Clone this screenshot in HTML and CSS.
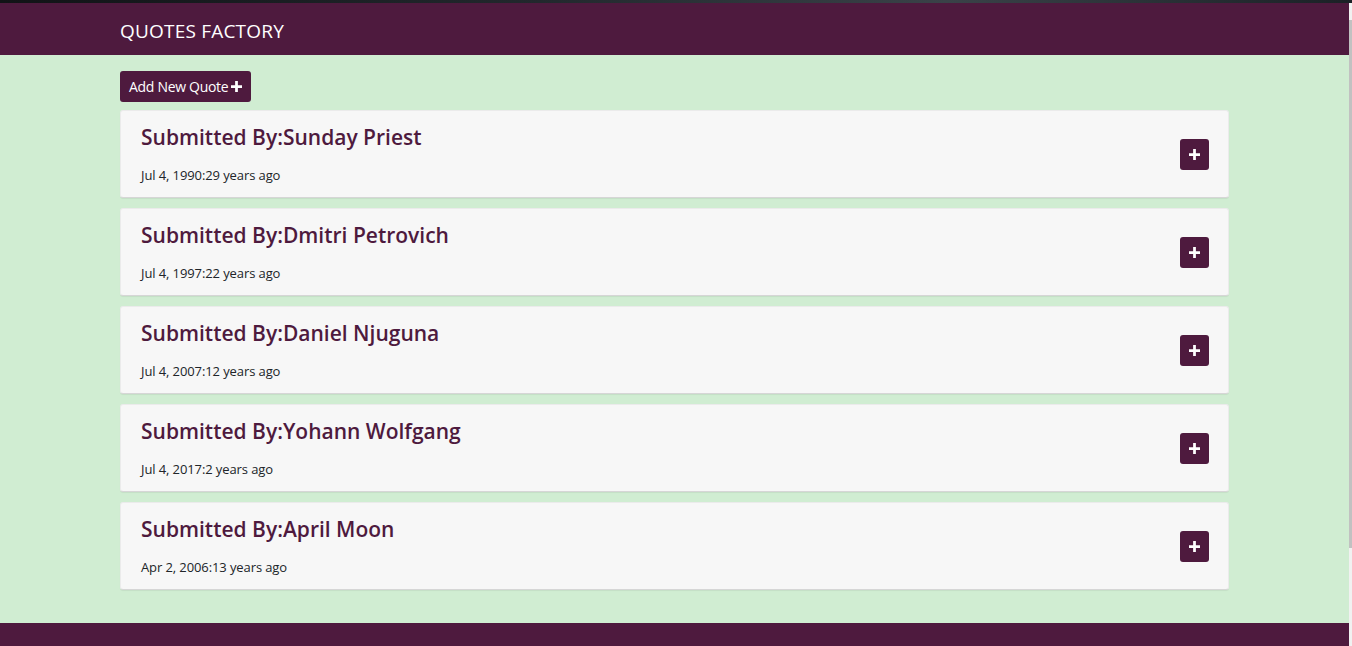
FILE: index.html
```html
<!DOCTYPE html>
<html lang="en">
<head>
<meta charset="utf-8">
<title>Quotes Factory</title>
<link rel="stylesheet" href="styles.css">
</head>
<body>
<div class="topstrip"></div>
<div class="frame">
  <div class="page">
    <header class="navbar">
      <div class="container">
        <span class="brand">QUOTES FACTORY</span>
      </div>
    </header>
    <main class="main">
      <div class="container">
        <button class="btn-add">Add New Quote<svg class="plus" viewBox="0 0 12 12"><path d="M4.5 0h3v4.5H12v3H7.5V12h-3V7.5H0v-3h4.5z"/></svg></button>
        <div class="cards">
          <div class="card">
            <div class="card-text">
              <h3 class="title">Submitted By:Sunday Priest</h3>
              <p class="date">Jul 4, 1990:29 years ago</p>
            </div>
            <button class="btn-toggle"><svg class="plus" viewBox="0 0 12 12"><path d="M4.5 0h3v4.5H12v3H7.5V12h-3V7.5H0v-3h4.5z"/></svg></button>
          </div>
          <div class="card">
            <div class="card-text">
              <h3 class="title">Submitted By:Dmitri Petrovich</h3>
              <p class="date">Jul 4, 1997:22 years ago</p>
            </div>
            <button class="btn-toggle"><svg class="plus" viewBox="0 0 12 12"><path d="M4.5 0h3v4.5H12v3H7.5V12h-3V7.5H0v-3h4.5z"/></svg></button>
          </div>
          <div class="card">
            <div class="card-text">
              <h3 class="title">Submitted By:Daniel Njuguna</h3>
              <p class="date">Jul 4, 2007:12 years ago</p>
            </div>
            <button class="btn-toggle"><svg class="plus" viewBox="0 0 12 12"><path d="M4.5 0h3v4.5H12v3H7.5V12h-3V7.5H0v-3h4.5z"/></svg></button>
          </div>
          <div class="card">
            <div class="card-text">
              <h3 class="title">Submitted By:Yohann Wolfgang</h3>
              <p class="date">Jul 4, 2017:2 years ago</p>
            </div>
            <button class="btn-toggle"><svg class="plus" viewBox="0 0 12 12"><path d="M4.5 0h3v4.5H12v3H7.5V12h-3V7.5H0v-3h4.5z"/></svg></button>
          </div>
          <div class="card">
            <div class="card-text">
              <h3 class="title">Submitted By:April Moon</h3>
              <p class="date">Apr 2, 2006:13 years ago</p>
            </div>
            <button class="btn-toggle"><svg class="plus" viewBox="0 0 12 12"><path d="M4.5 0h3v4.5H12v3H7.5V12h-3V7.5H0v-3h4.5z"/></svg></button>
          </div>
        </div>
      </div>
    </main>
    <footer class="footer"></footer>
  </div>
  <div class="scrollbar"><div class="thumb"></div></div>
</div>
</body>
</html>
```

FILE: styles.css
```css
* { box-sizing: border-box; }
html, body { margin: 0; padding: 0; height: 100%; overflow: hidden; }
body {
  font-family: "Open Sans", "Noto Sans", sans-serif;
  background: #d0edd2;
  color: #212529;
}
.topstrip {
  height: 3px;
  background: linear-gradient(90deg, #111316 0%, #22282d 40%, #3a4248 70%, #1b2126 100%);
}
.frame {
  display: flex;
  height: 643px;
}
.page {
  flex: 1;
  display: flex;
  flex-direction: column;
  min-width: 0;
}
.scrollbar {
  width: 3px;
  background: #f1f1f1;
  padding-top: 17px;
}
.scrollbar .thumb {
  height: 528px;
  background: #c1c1c1;
}
.container {
  width: 1109px;
  margin-left: 120px;
}
.navbar {
  background: #4e1a3e;
  height: 52px;
  flex: none;
  display: flex;
  align-items: center;
}
.brand {
  color: #fff;
  font-size: 19px;
  letter-spacing: 0.2px;
  display: block;
  padding-top: 3px;
}
.main {
  flex: 1;
  padding-top: 16px;
}
.btn-add {
  display: inline-flex;
  align-items: center;
  gap: 3px;
  height: 31px;
  padding: 0 9px;
  border: 0;
  border-radius: 3px;
  background: #4e1a3e;
  color: #fff;
  font-family: inherit;
  font-size: 14px;
  letter-spacing: -0.3px;
  margin-bottom: 8px;
}
.btn-add .plus {
  width: 11px;
  height: 11px;
  fill: #fff;
}
.cards {
  display: flex;
  flex-direction: column;
  gap: 10px;
}
.card {
  height: 88px;
  background: #f7f7f7;
  border: 1px solid #ebebeb;
  border-bottom-color: #d6d6d6;
  border-radius: 3px;
  box-shadow: 0 1px 1px rgba(0,0,0,0.06);
  display: flex;
  align-items: center;
  justify-content: space-between;
  padding: 0 19px 0 20px;
}
.card-text {
  align-self: flex-start;
  padding-top: 11px;
}
.title {
  margin: 0;
  color: #4e1a3e;
  font-size: 21px;
  font-weight: 600;
  line-height: 30px;
  letter-spacing: 0;
}
.date {
  margin: 14px 0 0;
  font-size: 13px;
  line-height: 18px;
  letter-spacing: -0.1px;
}
.btn-toggle {
  width: 29px;
  height: 31px;
  border: 0;
  border-radius: 3px;
  background: #4e1a3e;
  display: flex;
  align-items: center;
  justify-content: center;
  padding: 0;
}
.btn-toggle .plus {
  width: 11px;
  height: 11px;
  fill: #fff;
}
.footer {
  height: 23px;
  flex: none;
  background: #4e1a3e;
}
```
